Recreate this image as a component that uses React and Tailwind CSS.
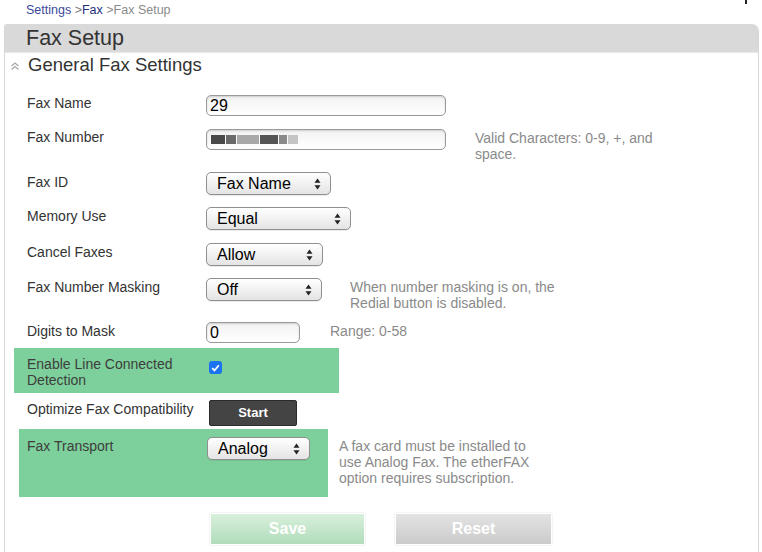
import React from "react";

const font = { fontFamily: '"Liberation Sans", Arial, Helvetica, sans-serif' };

const Arrows = () => (
    <svg width="7" height="12" viewBox="0 0 7 12" className="shrink-0">
        <path d="M3.5 0.5 L6.5 4.8 L0.5 4.8 Z" fill="#222" />
        <path d="M3.5 11.5 L6.5 7.2 L0.5 7.2 Z" fill="#222" />
    </svg>
);

const Select = ({ value, width }) => (
    <div
        className="h-[23px] flex items-center justify-between pl-[10px] pr-[9px] rounded-[5px] border border-[#8f8f8f] bg-gradient-to-b from-[#ffffff] to-[#e4e4e4] shadow-[0_1px_0_rgba(0,0,0,0.08)] text-[16px] text-black leading-none"
        style={{ width }}
    >
        <span>{value}</span>
        <Arrows />
    </div>
);

const TextInput = ({ width, children }) => (
    <div
        className="h-[21px] flex items-center pl-[3px] rounded-[5px] border border-[#9a9a9a] bg-gradient-to-b from-[#f2f2f2] to-[#ffffff] shadow-[inset_0_1px_2px_rgba(0,0,0,0.15)] text-[16px] text-black leading-none"
        style={{ width }}
    >
        {children}
    </div>
);

const Help = ({ children, className = "" }) => (
    <div className={`text-[14px] leading-[16px] text-[#8a8a8a] ${className}`}>{children}</div>
);

const Row = ({ label, h, labelTop = 1, children, help, helpGap = 28 }) => (
    <div className="flex items-start pl-[22px]" style={{ height: h }}>
        <div className="w-[179px] text-[14px] leading-[16px] text-[#333]" style={{ paddingTop: labelTop }}>
            {label}
        </div>
        <div className="flex items-start">
            {children}
            {help && <div style={{ marginLeft: helpGap, paddingTop: 1 }}>{help}</div>}
        </div>
    </div>
);

export default function App() {
    return (
        <div className="w-[762px] h-[552px] overflow-hidden bg-white" style={font}>
            {/* breadcrumb */}
            <div className="h-[24px] flex items-start justify-between pl-[26px] pr-[15px] pt-[3px] text-[12.5px] leading-[14px]">
                <div>
                    <span className="text-[#3b4a9c]">Settings</span>
                    <span className="text-[#7a7a7a]"> &gt;</span>
                    <span className="text-[#22307a] font-medium">Fax</span>
                    <span className="text-[#8a8a8a]"> &gt;Fax Setup</span>
                </div>
                <div className="w-[2px] h-[4px] bg-[#222] -mt-[3px]" />
            </div>

            {/* panel */}
            <div className="ml-[4px] w-[755px] h-[528px] border-l border-r border-[#d6d6d6] rounded-tr-[7px] rounded-tl-[3px]">
                <div className="h-[29px] bg-[#d9d9d9] rounded-tr-[6px] rounded-tl-[2px] border-b border-[#e9e9e9] flex items-center pl-[21px] text-[21.5px] text-[#333] leading-none pt-[1px]">
                    Fax Setup
                </div>

                <div className="h-[24px] flex items-center pl-[5px]">
                    <svg width="10" height="10" viewBox="0 0 10 10" className="mt-[1px]">
                        <path d="M1.5 5 L5 2 L8.5 5" fill="none" stroke="#a8a8a8" strokeWidth="1.3" />
                        <path d="M1.5 8.5 L5 5.5 L8.5 8.5" fill="none" stroke="#a8a8a8" strokeWidth="1.3" />
                    </svg>
                    <span className="ml-[8px] text-[18.5px] text-[#333] leading-none">General Fax Settings</span>
                </div>

                <div className="mt-[18px]">
                    <Row label="Fax Name" h={34} labelTop={0}>
                        <TextInput width={240}>29</TextInput>
                    </Row>
                    <Row
                        label="Fax Number"
                        h={43}
                        labelTop={0}
                        helpGap={29}
                        help={
                            <Help>
                                Valid Characters: 0-9, +, and
                                <br />
                                space.
                            </Help>
                        }
                    >
                        <TextInput width={240}>
                            <div className="flex items-center gap-[1px] blur-[0.7px] ml-[1px]">
                                <div className="w-[14px] h-[9px] bg-[#4a4a4a]" />
                                <div className="w-[10px] h-[9px] bg-[#6a6a6a]" />
                                <div className="w-[22px] h-[9px] bg-[#a8a8a8]" />
                                <div className="w-[18px] h-[9px] bg-[#555]" />
                                <div className="w-[8px] h-[9px] bg-[#8a8a8a]" />
                                <div className="w-[10px] h-[9px] bg-[#c4c4c4]" />
                            </div>
                        </TextInput>
                    </Row>
                    <Row label="Fax ID" h={35} labelTop={2}>
                        <Select value="Fax Name" width={125} />
                    </Row>
                    <Row label="Memory Use" h={36} labelTop={1}>
                        <Select value="Equal" width={145} />
                    </Row>
                    <Row label="Cancel Faxes" h={35} labelTop={1}>
                        <Select value="Allow" width={117} />
                    </Row>
                    <Row
                        label="Fax Number Masking"
                        h={44}
                        labelTop={1}
                        help={
                            <Help>
                                When number masking is on, the
                                <br />
                                Redial button is disabled.
                            </Help>
                        }
                    >
                        <Select value="Off" width={116} />
                    </Row>
                    <Row
                        label="Digits to Mask"
                        h={26}
                        labelTop={1}
                        helpGap={30}
                        help={<Help>Range: 0-58</Help>}
                    >
                        <TextInput width={94}>0</TextInput>
                    </Row>

                    {/* green 1 */}
                    <div className="ml-[9px] w-[325px] h-[45px] bg-[#7dd09b] flex items-start pl-[13px] pt-[8px]">
                        <div className="w-[182px] text-[14px] leading-[16px] text-[#3d3d3d]">
                            Enable Line Connected
                            <br />
                            Detection
                        </div>
                        <div className="mt-[5px] w-[13px] h-[13px] rounded-[3px] bg-[#1a73f0] flex items-center justify-center">
                            <svg width="9" height="8" viewBox="0 0 9 8">
                                <path d="M1.2 4.2 L3.5 6.5 L7.8 1.3" fill="none" stroke="white" strokeWidth="1.8" />
                            </svg>
                        </div>
                    </div>

                    <div className="h-[7px]" />
                    <div className="flex items-start pl-[22px] h-[29px]">
                        <div className="w-[182px] text-[14px] leading-[16px] text-[#333] pt-[1px]">
                            Optimize Fax Compatibility
                        </div>
                        <div className="w-[88px] h-[26px] bg-[#444] border border-[#2a2a2a] rounded-[2px] flex items-center justify-center text-white font-bold text-[13px]">
                            Start
                        </div>
                    </div>

                    {/* green 2 */}
                    <div className="flex items-start">
                        <div className="ml-[14px] w-[309px] h-[68px] bg-[#7dd09b] flex items-start pl-[8px] pt-[8px]">
                            <div className="w-[180px] text-[14px] leading-[16px] text-[#3d3d3d] pt-[1px]">Fax Transport</div>
                            <Select value="Analog" width={103} />
                        </div>
                        <Help className="ml-[11px] pt-[9px]">
                            A fax card must be installed to
                            <br />
                            use Analog Fax. The etherFAX
                            <br />
                            option requires subscription.
                        </Help>
                    </div>

                    {/* buttons */}
                    <div className="flex items-start pl-[204px] mt-[15px] gap-[28px]">
                        <div className="p-[1px] rounded-[3px] border border-[#f4f4f4]">
                            <div className="w-[153px] h-[30px] bg-gradient-to-b from-[#d8f0dc] to-[#b1dcbb] flex items-center justify-center text-white font-bold text-[16px]">
                                Save
                            </div>
                        </div>
                        <div className="p-[1px] rounded-[3px] border border-[#f4f4f4]">
                            <div className="w-[155px] h-[30px] bg-gradient-to-b from-[#e3e3e3] to-[#cbcbcb] flex items-center justify-center text-white font-bold text-[16px]">
                                Reset
                            </div>
                        </div>
                    </div>
                </div>
            </div>
        </div>
    );
}
